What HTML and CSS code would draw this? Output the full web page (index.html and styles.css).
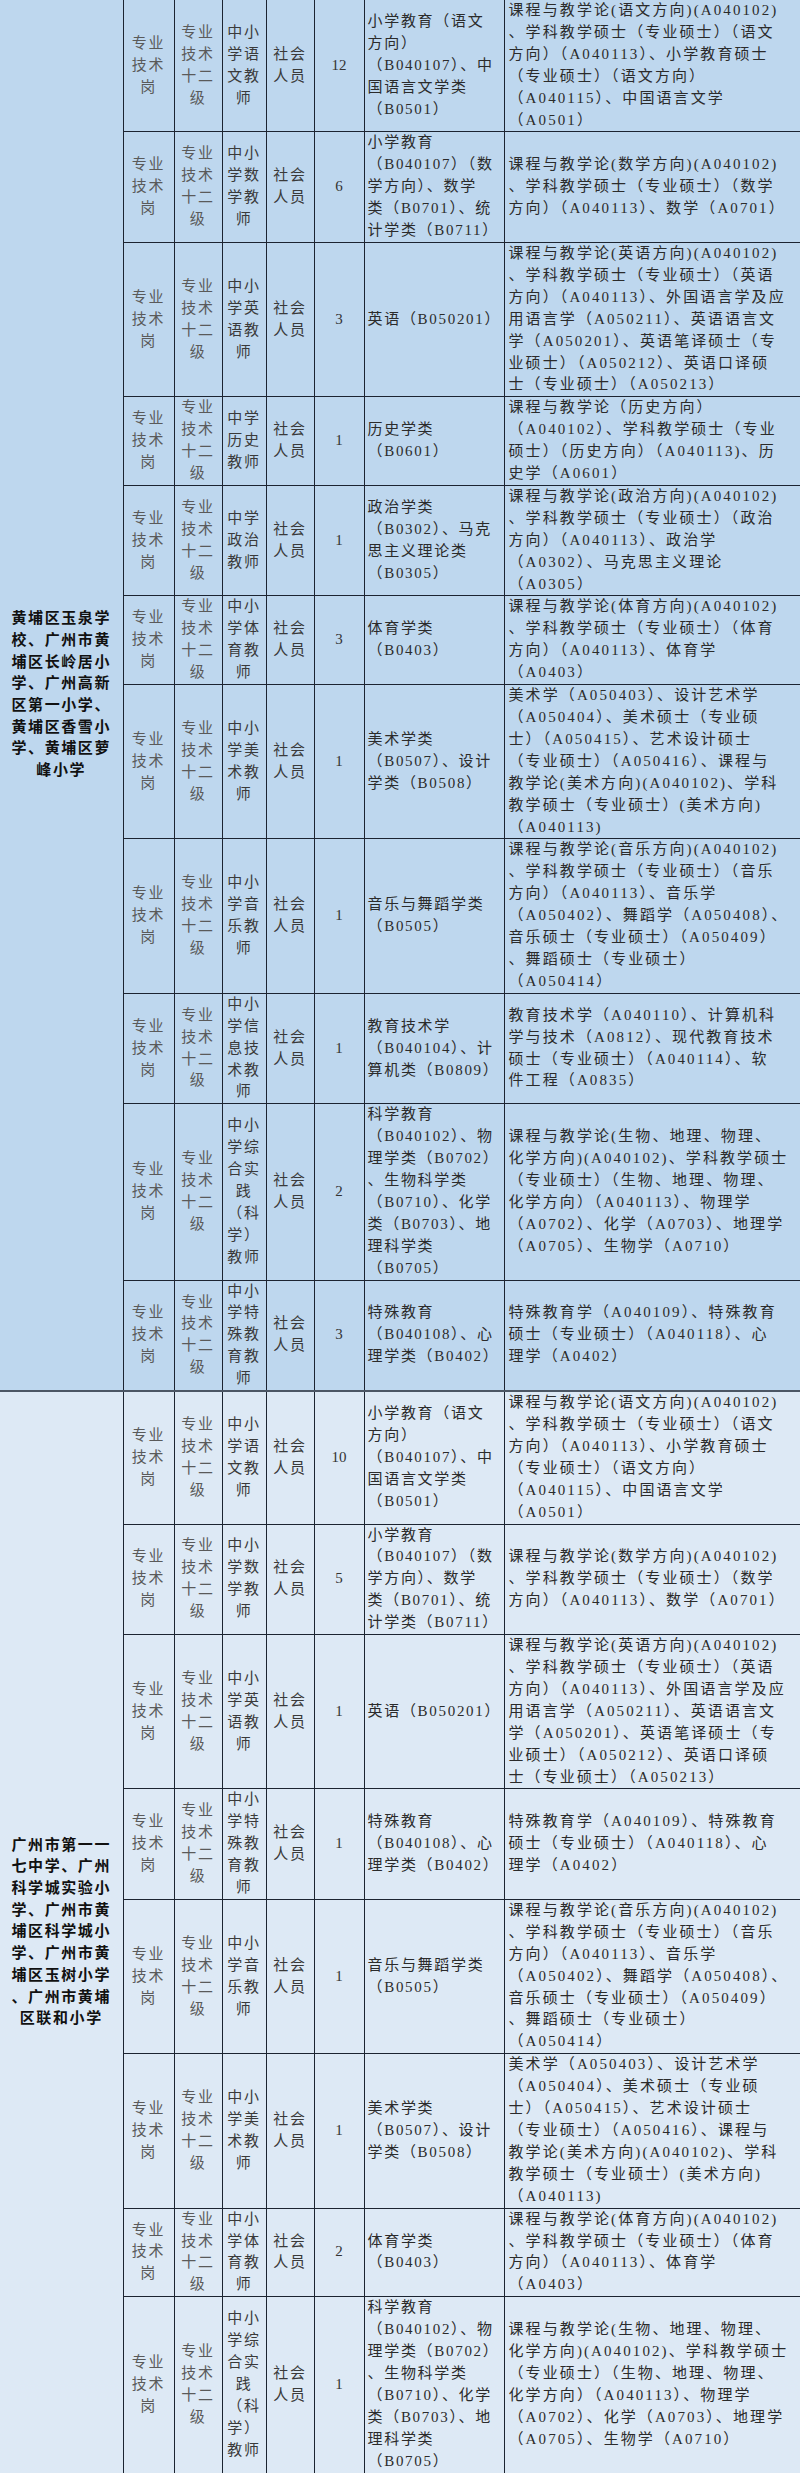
FILE: index.html
```html
<!DOCTYPE html>
<html lang="zh-CN">
<head>
<meta charset="utf-8">
<title>招聘岗位表</title>
<link rel="stylesheet" href="styles.css">
</head>
<body>
<table class="recruit">
  <colgroup>
    <col class="w-unit"><col class="w-post"><col class="w-level"><col class="w-name"><col class="w-src"><col class="w-num"><col class="w-major"><col class="w-req">
  </colgroup>
  <tbody>
    <!-- group 1 -->
    <tr class="g1 top">
      <td class="unit" rowspan="11">黄埔区玉泉学<br>校、广州市黄<br>埔区长岭居小<br>学、广州高新<br>区第一小学、<br>黄埔区香雪小<br>学、黄埔区萝<br>峰小学</td>
      <td class="post">专业<br>技术<br>岗</td>
      <td class="level">专业<br>技术<br>十二<br>级</td>
      <td class="name">中小<br>学语<br>文教<br>师</td>
      <td class="src">社会<br>人员</td>
      <td class="num">12</td>
      <td class="major">小学教育（语文<br>方向）<br>（B040107）、中<br>国语言文学类<br>（B0501）</td>
      <td class="req">课程与教学论(语文方向)(A040102)<br>、学科教学硕士（专业硕士）（语文<br>方向）（A040113）、小学教育硕士<br>（专业硕士）（语文方向）<br>（A040115）、中国语言文学<br>（A0501）</td>
    </tr>
    <tr class="g1">
      <td class="post">专业<br>技术<br>岗</td>
      <td class="level">专业<br>技术<br>十二<br>级</td>
      <td class="name">中小<br>学数<br>学教<br>师</td>
      <td class="src">社会<br>人员</td>
      <td class="num">6</td>
      <td class="major">小学教育<br>（B040107）（数<br>学方向）、数学<br>类（B0701）、统<br>计学类（B0711）</td>
      <td class="req">课程与教学论(数学方向)(A040102)<br>、学科教学硕士（专业硕士）（数学<br>方向）（A040113）、数学（A0701）</td>
    </tr>
    <tr class="g1">
      <td class="post">专业<br>技术<br>岗</td>
      <td class="level">专业<br>技术<br>十二<br>级</td>
      <td class="name">中小<br>学英<br>语教<br>师</td>
      <td class="src">社会<br>人员</td>
      <td class="num">3</td>
      <td class="major">英语（B050201）</td>
      <td class="req">课程与教学论(英语方向)(A040102)<br>、学科教学硕士（专业硕士）（英语<br>方向）（A040113）、外国语言学及应<br>用语言学（A050211）、英语语言文<br>学（A050201）、英语笔译硕士（专<br>业硕士）（A050212）、英语口译硕<br>士（专业硕士）（A050213）</td>
    </tr>
    <tr class="g1">
      <td class="post">专业<br>技术<br>岗</td>
      <td class="level">专业<br>技术<br>十二<br>级</td>
      <td class="name">中学<br>历史<br>教师</td>
      <td class="src">社会<br>人员</td>
      <td class="num">1</td>
      <td class="major">历史学类<br>（B0601）</td>
      <td class="req">课程与教学论（历史方向）<br>（A040102）、学科教学硕士（专业<br>硕士）（历史方向）（A040113)、历<br>史学（A0601）</td>
    </tr>
    <tr class="g1">
      <td class="post">专业<br>技术<br>岗</td>
      <td class="level">专业<br>技术<br>十二<br>级</td>
      <td class="name">中学<br>政治<br>教师</td>
      <td class="src">社会<br>人员</td>
      <td class="num">1</td>
      <td class="major">政治学类<br>（B0302）、马克<br>思主义理论类<br>（B0305）</td>
      <td class="req">课程与教学论(政治方向)(A040102)<br>、学科教学硕士（专业硕士）（政治<br>方向）（A040113）、政治学<br>（A0302）、马克思主义理论<br>（A0305）</td>
    </tr>
    <tr class="g1">
      <td class="post">专业<br>技术<br>岗</td>
      <td class="level">专业<br>技术<br>十二<br>级</td>
      <td class="name">中小<br>学体<br>育教<br>师</td>
      <td class="src">社会<br>人员</td>
      <td class="num">3</td>
      <td class="major">体育学类<br>（B0403）</td>
      <td class="req">课程与教学论(体育方向)(A040102)<br>、学科教学硕士（专业硕士）（体育<br>方向）（A040113）、体育学<br>（A0403）</td>
    </tr>
    <tr class="g1">
      <td class="post">专业<br>技术<br>岗</td>
      <td class="level">专业<br>技术<br>十二<br>级</td>
      <td class="name">中小<br>学美<br>术教<br>师</td>
      <td class="src">社会<br>人员</td>
      <td class="num">1</td>
      <td class="major">美术学类<br>（B0507）、设计<br>学类（B0508）</td>
      <td class="req">美术学（A050403）、设计艺术学<br>（A050404）、美术硕士（专业硕<br>士）（A050415）、艺术设计硕士<br>（专业硕士）（A050416）、课程与<br>教学论(美术方向)(A040102)、学科<br>教学硕士（专业硕士）(美术方向)<br>（A040113)</td>
    </tr>
    <tr class="g1">
      <td class="post">专业<br>技术<br>岗</td>
      <td class="level">专业<br>技术<br>十二<br>级</td>
      <td class="name">中小<br>学音<br>乐教<br>师</td>
      <td class="src">社会<br>人员</td>
      <td class="num">1</td>
      <td class="major">音乐与舞蹈学类<br>（B0505）</td>
      <td class="req">课程与教学论(音乐方向)(A040102)<br>、学科教学硕士（专业硕士）（音乐<br>方向）（A040113）、音乐学<br>（A050402）、舞蹈学（A050408）、<br>音乐硕士（专业硕士）（A050409）<br>、舞蹈硕士（专业硕士）<br>（A050414）</td>
    </tr>
    <tr class="g1">
      <td class="post">专业<br>技术<br>岗</td>
      <td class="level">专业<br>技术<br>十二<br>级</td>
      <td class="name">中小<br>学信<br>息技<br>术教<br>师</td>
      <td class="src">社会<br>人员</td>
      <td class="num">1</td>
      <td class="major">教育技术学<br>（B040104）、计<br>算机类（B0809）</td>
      <td class="req">教育技术学（A040110）、计算机科<br>学与技术（A0812）、现代教育技术<br>硕士（专业硕士）（A040114）、软<br>件工程（A0835）</td>
    </tr>
    <tr class="g1">
      <td class="post">专业<br>技术<br>岗</td>
      <td class="level">专业<br>技术<br>十二<br>级</td>
      <td class="name">中小<br>学综<br>合实<br>践<br>（科<br>学）<br>教师</td>
      <td class="src">社会<br>人员</td>
      <td class="num">2</td>
      <td class="major">科学教育<br>（B040102）、物<br>理学类（B0702）<br>、生物科学类<br>（B0710）、化学<br>类（B0703）、地<br>理科学类<br>（B0705）</td>
      <td class="req">课程与教学论(生物、地理、物理、<br>化学方向)(A040102)、学科教学硕士<br>（专业硕士）（生物、地理、物理、<br>化学方向）（A040113）、物理学<br>（A0702）、化学（A0703）、地理学<br>（A0705）、生物学（A0710）</td>
    </tr>
    <tr class="g1">
      <td class="post">专业<br>技术<br>岗</td>
      <td class="level">专业<br>技术<br>十二<br>级</td>
      <td class="name">中小<br>学特<br>殊教<br>育教<br>师</td>
      <td class="src">社会<br>人员</td>
      <td class="num">3</td>
      <td class="major">特殊教育<br>（B040108）、心<br>理学类（B0402）</td>
      <td class="req">特殊教育学（A040109）、特殊教育<br>硕士（专业硕士）（A040118）、心<br>理学（A0402）</td>
    </tr>

    <!-- group 2 -->
    <tr class="g2 split">
      <td class="unit" rowspan="8">广州市第一一<br>七中学、广州<br>科学城实验小<br>学、广州市黄<br>埔区科学城小<br>学、广州市黄<br>埔区玉树小学<br>、广州市黄埔<br>区联和小学</td>
      <td class="post">专业<br>技术<br>岗</td>
      <td class="level">专业<br>技术<br>十二<br>级</td>
      <td class="name">中小<br>学语<br>文教<br>师</td>
      <td class="src">社会<br>人员</td>
      <td class="num">10</td>
      <td class="major">小学教育（语文<br>方向）<br>（B040107）、中<br>国语言文学类<br>（B0501）</td>
      <td class="req">课程与教学论(语文方向)(A040102)<br>、学科教学硕士（专业硕士）（语文<br>方向）（A040113）、小学教育硕士<br>（专业硕士）（语文方向）<br>（A040115）、中国语言文学<br>（A0501）</td>
    </tr>
    <tr class="g2">
      <td class="post">专业<br>技术<br>岗</td>
      <td class="level">专业<br>技术<br>十二<br>级</td>
      <td class="name">中小<br>学数<br>学教<br>师</td>
      <td class="src">社会<br>人员</td>
      <td class="num">5</td>
      <td class="major">小学教育<br>（B040107）（数<br>学方向）、数学<br>类（B0701）、统<br>计学类（B0711）</td>
      <td class="req">课程与教学论(数学方向)(A040102)<br>、学科教学硕士（专业硕士）（数学<br>方向）（A040113）、数学（A0701）</td>
    </tr>
    <tr class="g2">
      <td class="post">专业<br>技术<br>岗</td>
      <td class="level">专业<br>技术<br>十二<br>级</td>
      <td class="name">中小<br>学英<br>语教<br>师</td>
      <td class="src">社会<br>人员</td>
      <td class="num">1</td>
      <td class="major">英语（B050201）</td>
      <td class="req">课程与教学论(英语方向)(A040102)<br>、学科教学硕士（专业硕士）（英语<br>方向）（A040113）、外国语言学及应<br>用语言学（A050211）、英语语言文<br>学（A050201）、英语笔译硕士（专<br>业硕士）（A050212）、英语口译硕<br>士（专业硕士）（A050213）</td>
    </tr>
    <tr class="g2">
      <td class="post">专业<br>技术<br>岗</td>
      <td class="level">专业<br>技术<br>十二<br>级</td>
      <td class="name">中小<br>学特<br>殊教<br>育教<br>师</td>
      <td class="src">社会<br>人员</td>
      <td class="num">1</td>
      <td class="major">特殊教育<br>（B040108）、心<br>理学类（B0402）</td>
      <td class="req">特殊教育学（A040109）、特殊教育<br>硕士（专业硕士）（A040118）、心<br>理学（A0402）</td>
    </tr>
    <tr class="g2">
      <td class="post">专业<br>技术<br>岗</td>
      <td class="level">专业<br>技术<br>十二<br>级</td>
      <td class="name">中小<br>学音<br>乐教<br>师</td>
      <td class="src">社会<br>人员</td>
      <td class="num">1</td>
      <td class="major">音乐与舞蹈学类<br>（B0505）</td>
      <td class="req">课程与教学论(音乐方向)(A040102)<br>、学科教学硕士（专业硕士）（音乐<br>方向）（A040113）、音乐学<br>（A050402）、舞蹈学（A050408）、<br>音乐硕士（专业硕士）（A050409）<br>、舞蹈硕士（专业硕士）<br>（A050414）</td>
    </tr>
    <tr class="g2">
      <td class="post">专业<br>技术<br>岗</td>
      <td class="level">专业<br>技术<br>十二<br>级</td>
      <td class="name">中小<br>学美<br>术教<br>师</td>
      <td class="src">社会<br>人员</td>
      <td class="num">1</td>
      <td class="major">美术学类<br>（B0507）、设计<br>学类（B0508）</td>
      <td class="req">美术学（A050403）、设计艺术学<br>（A050404）、美术硕士（专业硕<br>士）（A050415）、艺术设计硕士<br>（专业硕士）（A050416）、课程与<br>教学论(美术方向)(A040102)、学科<br>教学硕士（专业硕士）(美术方向)<br>（A040113)</td>
    </tr>
    <tr class="g2">
      <td class="post">专业<br>技术<br>岗</td>
      <td class="level">专业<br>技术<br>十二<br>级</td>
      <td class="name">中小<br>学体<br>育教<br>师</td>
      <td class="src">社会<br>人员</td>
      <td class="num">2</td>
      <td class="major">体育学类<br>（B0403）</td>
      <td class="req">课程与教学论(体育方向)(A040102)<br>、学科教学硕士（专业硕士）（体育<br>方向）（A040113）、体育学<br>（A0403）</td>
    </tr>
    <tr class="g2">
      <td class="post">专业<br>技术<br>岗</td>
      <td class="level">专业<br>技术<br>十二<br>级</td>
      <td class="name">中小<br>学综<br>合实<br>践<br>（科<br>学）<br>教师</td>
      <td class="src">社会<br>人员</td>
      <td class="num">1</td>
      <td class="major">科学教育<br>（B040102）、物<br>理学类（B0702）<br>、生物科学类<br>（B0710）、化学<br>类（B0703）、地<br>理科学类<br>（B0705）</td>
      <td class="req">课程与教学论(生物、地理、物理、<br>化学方向)(A040102)、学科教学硕士<br>（专业硕士）（生物、地理、物理、<br>化学方向）（A040113）、物理学<br>（A0702）、化学（A0703）、地理学<br>（A0705）、生物学（A0710）</td>
    </tr>
  </tbody>
</table>
</body>
</html>
```

FILE: styles.css
```css
html, body {
  margin: 0;
  padding: 0;
  background: #dde9f5;
}

.recruit {
  width: 800px;
  border-collapse: collapse;
  table-layout: fixed;
  font-family: "Liberation Serif", "Noto Sans CJK SC", serif;
  font-size: 15px;
  line-height: 21.9px;
  letter-spacing: 1.7px;
  color: #2b2b2b;
}

.w-unit  { width: 123px; }
.w-post  { width: 51px; }
.w-level { width: 48px; }
.w-name  { width: 44px; }
.w-src   { width: 48px; }
.w-num   { width: 50px; }
.w-major { width: 140px; }
.w-req   { width: 296px; }

.recruit td {
  border: 1px solid #1c2431;
  padding: 0;
  vertical-align: middle;
  white-space: nowrap;
  overflow: hidden;
}

.g1 td { background: #bed7ee; }
.g2 td { background: #dde9f5; }

.top td { border-top: none; }
.split td { border-top: 2px solid #4b5664; }

.recruit td.unit {
  border-left: none;
  font-weight: bold;
  color: #111111;
  text-align: center;
  line-height: 21.7px;
  letter-spacing: 1.6px;
}

.post, .level {
  text-align: center;
  color: #5a5a5a;
}

.name, .src {
  text-align: center;
  color: #3a3a3a;
}

.num {
  text-align: center;
  color: #333333;
  letter-spacing: 0;
}

.recruit td.major {
  padding-left: 3px;
  text-align: left;
}

.recruit td.req {
  padding-left: 4px;
  text-align: left;
  letter-spacing: 2.1px;
}
```
